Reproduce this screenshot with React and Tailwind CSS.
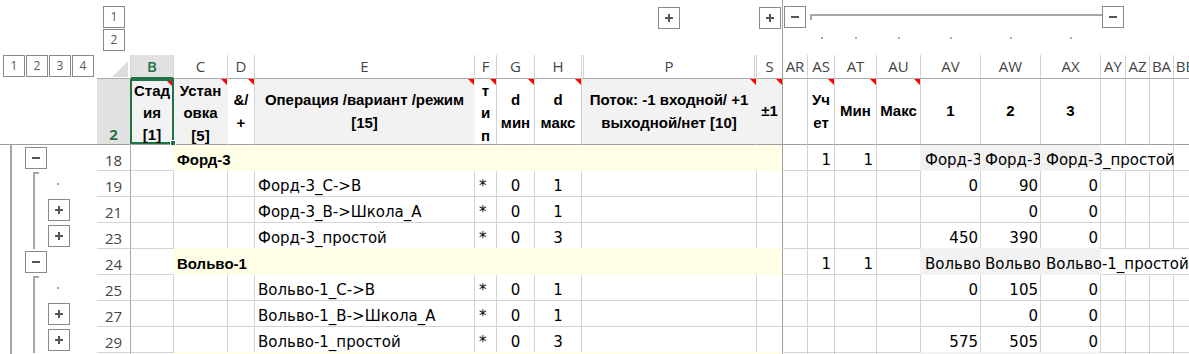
import React from "react";

const F_CELL = "font-['DejaVu_Sans',sans-serif]";
const F_BOLD = "font-['Liberation_Sans',Arial,sans-serif] font-bold";
const F_UI = "font-['Open_Sans',sans-serif]";

const COLS = [
  { k: "B", w: "w-[43px]" },
  { k: "C", w: "w-[54px]" },
  { k: "D", w: "w-[27px]" },
  { k: "E", w: "w-[220px]" },
  { k: "F", w: "w-[22px]" },
  { k: "G", w: "w-[38px]" },
  { k: "H", w: "w-[47px]" },
  { k: "P", w: "w-[175px]" },
  { k: "S", w: "w-[26px]" },
  { k: "AR", w: "w-[25px]" },
  { k: "AS", w: "w-[27px]" },
  { k: "AT", w: "w-[42px]" },
  { k: "AU", w: "w-[44px]" },
  { k: "AV", w: "w-[60px]" },
  { k: "AW", w: "w-[60px]" },
  { k: "AX", w: "w-[60px]" },
  { k: "AY", w: "w-[25px]" },
  { k: "AZ", w: "w-[24px]" },
  { k: "BA", w: "w-[24px]" },
  { k: "BB", w: "w-[24px]" },
];

const YCOLS = ["C", "D", "E", "F", "G", "H", "P", "S"];
const GCOLS = ["AV", "AW", "AX"];

const H2 = {
  C: { lines: ["Устан", "овка", "[5]"], grey: true, tri: true },
  D: { lines: ["&/", "+"], tri: true },
  E: { lines: ["Операция /вариант /режим", "[15]"], grey: true, tri: true },
  F: { lines: ["т", "и", "п"], tri: true },
  G: { lines: ["d", "мин"], tri: true },
  H: { lines: ["d", "макс"], tri: true },
  P: { lines: ["Поток: -1 входной/ +1", "выходной/нет [10]"], grey: true, tri: true },
  S: { lines: ["±1"], grey: true, tri: true },
  AR: { lines: [] },
  AS: { lines: ["Уч", "ет"], tri: true },
  AT: { lines: ["Мин"], tri: true },
  AU: { lines: ["Макс"], tri: true },
  AV: { lines: ["1"] },
  AW: { lines: ["2"] },
  AX: { lines: ["3"] },
};

const ROWS = [
  { n: 18, o: "group", g: true, txt: "Форд-3", as: "1", at: "1", av: "Форд-3", aw: "Форд-3", ax: "Форд-3_простой", hide: ["AY", "AZ"] },
  { n: 19, o: "first", e: "Форд-3_С->В", h: "1", av: "0", aw: "90", ax: "0" },
  { n: 21, o: "plus", e: "Форд-3_В->Школа_А", h: "1", av: "", aw: "0", ax: "0" },
  { n: 23, o: "plus", e: "Форд-3_простой", h: "3", av: "450", aw: "390", ax: "0", next: true },
  { n: 24, o: "group", g: true, txt: "Вольво-1", as: "1", at: "1", av: "Вольво-1", aw: "Вольво-1", ax: "Вольво-1_простой", hide: ["AY", "AZ", "BA"] },
  { n: 25, o: "first", e: "Вольво-1_С->В", h: "1", av: "0", aw: "105", ax: "0" },
  { n: 27, o: "plus", e: "Вольво-1_В->Школа_А", h: "1", av: "", aw: "0", ax: "0" },
  { n: 29, o: "plus", e: "Вольво-1_простой", h: "3", av: "575", aw: "505", ax: "0", next: true },
  { n: 30, o: "group", g: true, txt: "", av: "", aw: "", ax: "" },
];

function Tri({ s = 6 }) {
  return (
    <svg className="absolute top-0 right-0" width={s} height={s} viewBox="0 0 6 6">
      <polygon points="0,0 6,0 6,6" fill="#ff0000" />
    </svg>
  );
}

function OBtn({ sign }) {
  return (
    <div className="w-[22px] h-[22px] shrink-0 border border-[#8a8a8a] bg-white flex items-center justify-center">
      <svg width="8" height="8" viewBox="0 0 8 8">
        <rect x="0" y="3" width="8" height="2" fill="#555555" />
        {sign === "+" && <rect x="3" y="0" width="2" height="8" fill="#555555" />}
      </svg>
    </div>
  );
}

function LevelBtn({ n }) {
  return (
    <div className={`w-[22px] h-[22px] shrink-0 border border-[#8a8a8a] flex items-center justify-center text-[12px] text-[#595959] ${F_UI}`}>
      {n}
    </div>
  );
}

function Dot() {
  return <div className="w-[2px] h-[2px] bg-[#ababab]" />;
}

function TopBand() {
  const right = COLS.slice(9, 16);
  return (
    <div className="flex h-[55px] w-max">
      <div className="w-[97px] shrink-0" />
      <div className="w-[34px] shrink-0 flex flex-col gap-[1px] pt-[6px] pl-[6px]">
        <LevelBtn n="1" />
        <LevelBtn n="2" />
      </div>
      <div className="w-[652px] shrink-0 border-r border-r-[#9e9e9e] flex items-start pt-[7px]">
        <div className="w-[527px] shrink-0" />
        <OBtn sign="+" />
        <div className="w-[79px] shrink-0" />
        <OBtn sign="+" />
      </div>
      <div className="flex flex-col">
        <div className="h-[29px] flex items-start pt-[6px]">
          <div className="w-[1px] shrink-0" />
          <OBtn sign="-" />
          <div className="ml-[4px] mt-[8px] w-[292px] h-[6px] shrink-0 border-l-2 border-t-2 border-l-[#a6a6a6] border-t-[#a6a6a6]" />
          <OBtn sign="-" />
        </div>
        <div className="h-[26px] flex">
          {right.map((c) => (
            <div key={c.k} className={`${c.w} shrink-0 flex justify-center pt-[8px]`}>
              {c.k !== "AR" && <Dot />}
            </div>
          ))}
        </div>
      </div>
    </div>
  );
}

function ColHead({ c }) {
  const rc = c.k === "S" ? "border-r-[#9e9e9e]" : "border-r-[#d4d4d4]";
  if (c.k === "P") {
    return (
      <div className={`${c.w} shrink-0 border-b border-b-[#ababab] border-r ${rc} flex`}>
        <div className={`flex-1 mx-[1px] border-l border-r border-l-[#d4d4d4] border-r-[#d4d4d4] flex items-center justify-center text-[15px] text-[#444444] ${F_UI}`}>
          P
        </div>
      </div>
    );
  }
  const sel = c.k === "B";
  return (
    <div
      className={`${c.w} shrink-0 border-r ${rc} ${
        sel
          ? "border-b-2 border-b-[#217346] bg-[#e1e1e1] text-[#217346] font-semibold"
          : "border-b border-b-[#ababab] text-[#444444]"
      } flex items-center justify-center overflow-hidden whitespace-nowrap text-[15px] ${F_UI}`}
    >
      {c.k}
    </div>
  );
}

function ColHeaderRow() {
  return (
    <div className="flex h-[24px] w-max">
      <div className="w-[97px] shrink-0 flex gap-[1px] pl-[3px]">
        {["1", "2", "3", "4"].map((n) => (
          <LevelBtn key={n} n={n} />
        ))}
      </div>
      <div className="w-[34px] shrink-0 border-b border-b-[#ababab] border-r border-r-[#d4d4d4] flex items-end justify-end pr-[2px] pb-[1px]">
        <svg width="16" height="16" viewBox="0 0 16 16">
          <polygon points="16,0 16,16 0,16" fill="#dcdcdc" />
        </svg>
      </div>
      {COLS.map((c) => (
        <ColHead key={c.k} c={c} />
      ))}
    </div>
  );
}

function H2Cell({ c }) {
  const d = H2[c.k] || { lines: [] };
  const rc = c.k === "S" ? "border-r-[#9e9e9e]" : d.grey ? "border-r-[#f2f2f2]" : "border-r-[#d4d4d4]";
  const three = d.lines.length === 3;
  return (
    <div
      className={`${c.w} shrink-0 relative border-b border-b-[#9e9e9e] border-r ${rc} ${
        d.grey ? "bg-[#f2f2f2]" : ""
      } flex flex-col items-center justify-center ${three ? "pt-[4px]" : ""} leading-[22.5px] text-[15px] text-black whitespace-nowrap ${F_BOLD}`}
    >
      {d.lines.map((l, i) => (
        <div key={i}>{l}</div>
      ))}
      {d.tri && <Tri />}
    </div>
  );
}

function HeaderRow2() {
  return (
    <div className="flex h-[66px] w-max">
      <div className="w-[97px] shrink-0 border-b border-b-[#9e9e9e]" />
      <div className={`w-[34px] shrink-0 bg-[#e1e1e1] border-b border-b-[#9e9e9e] border-r border-r-[#ababab] flex items-end justify-center leading-[20px] text-[15px] font-bold text-[#217346] ${F_UI}`}>
        2
      </div>
      <div className="w-[43px] shrink-0 border-b border-b-[#9e9e9e] flex">
        <div className={`relative flex-1 -ml-[1px] border-2 border-[#217346] bg-[#f2f2f2] flex flex-col items-center justify-center pt-[3px] leading-[22px] text-[15px] text-black whitespace-nowrap ${F_BOLD}`}>
          <div>Стад</div>
          <div>ия</div>
          <div>[1]</div>
          <Tri s={5} />
          <div className="absolute -right-[4px] -bottom-[4px] z-10 w-[6px] h-[6px] bg-[#217346] border border-white" />
        </div>
      </div>
      {COLS.slice(1).map((c) => (
        <H2Cell key={c.k} c={c} />
      ))}
    </div>
  );
}

function Outline({ type }) {
  return (
    <div className="w-[97px] shrink-0 h-full flex">
      <div className="w-[10px] shrink-0" />
      <div className="w-[2px] shrink-0 h-full bg-[#a6a6a6]" />
      {type === "group" ? (
        <>
          <div className="w-[13px] shrink-0" />
          <div className="flex items-center">
            <OBtn sign="-" />
          </div>
        </>
      ) : (
        <>
          <div className="w-[21px] shrink-0" />
          <div
            className={`w-[6px] shrink-0 border-l-2 border-l-[#a6a6a6] ${
              type === "first" ? "mt-[1px] border-t-2 border-t-[#a6a6a6]" : ""
            }`}
          />
          {type === "first" ? (
            <>
              <div className="w-[18px] shrink-0" />
              <div className="flex items-center">
                <Dot />
              </div>
            </>
          ) : (
            <>
              <div className="w-[9px] shrink-0" />
              <div className="flex items-center">
                <OBtn sign="+" />
              </div>
            </>
          )}
        </>
      )}
    </div>
  );
}

function DataCell({ c, r }) {
  const k = c.k;
  const yel = r.g && YCOLS.includes(k);
  const gry = r.g && GCOLS.includes(k);
  const bg = yel ? "bg-[#fffee6]" : gry ? "bg-[#f2f2f2]" : "";

  let rb = "border-r-[#d4d4d4]";
  if (k === "S") rb = "border-r-[#9e9e9e]";
  else if (yel) rb = "border-r-[#fffee6]";
  else if (gry) rb = "border-r-[#f2f2f2]";
  else if (r.g && k === "B") rb = "border-r-[#fffee6]";
  else if (r.g && k === "AU") rb = "border-r-[#f2f2f2]";
  else if (r.hide && r.hide.includes(k)) rb = "border-r-transparent";

  let bb = "border-b-[#d4d4d4]";
  if (yel) bb = "border-b-[#fffee6]";
  else if (gry) bb = "border-b-[#f2f2f2]";
  else if (r.next && YCOLS.includes(k)) bb = "border-b-[#fffee6]";
  else if (r.next && GCOLS.includes(k)) bb = "border-b-[#f2f2f2]";

  let content = null;
  let align = "justify-start";
  let extra = "";

  if (r.g) {
    if (k === "C" && r.txt) {
      content = <span className={`relative z-10 pl-[3px] text-[15px] ${F_BOLD}`}>{r.txt}</span>;
    } else if (k === "AS" && r.as) {
      content = <span className="pr-[3px]">{r.as}</span>;
      align = "justify-end";
    } else if (k === "AT" && r.at) {
      content = <span className="pr-[3px]">{r.at}</span>;
      align = "justify-end";
    } else if ((k === "AV" || k === "AW") && r[k.toLowerCase()]) {
      content = <span className="pl-[4px]">{r[k.toLowerCase()]}</span>;
      extra = "overflow-hidden";
    } else if (k === "AX" && r.ax) {
      content = <span className="relative z-10 pl-[5px]">{r.ax}</span>;
    }
  } else {
    if (k === "E") content = <span className="pl-[3px]">{r.e}</span>;
    else if (k === "F") content = <span className="pl-[4px]">*</span>;
    else if (k === "G") {
      content = <span>0</span>;
      align = "justify-center";
    } else if (k === "H") {
      content = <span>{r.h}</span>;
      align = "justify-center";
    } else if (GCOLS.includes(k)) {
      const v = r[k.toLowerCase()];
      if (v) content = <span className="pr-[2px]">{v}</span>;
      align = "justify-end";
    }
  }

  return (
    <div
      className={`${c.w} shrink-0 h-full border-r border-b ${rb} ${bb} ${bg} flex items-end ${align} ${extra} whitespace-nowrap leading-[20px] text-[15px] text-black`}
    >
      {content}
    </div>
  );
}

function DataRow({ r }) {
  return (
    <div className="flex h-[26px] w-max">
      <Outline type={r.o} />
      <div className={`w-[34px] shrink-0 h-full border-b border-b-[#d4d4d4] border-r border-r-[#ababab] flex items-end justify-center leading-[20px] text-[15px] text-[#444444] ${F_UI}`}>
        {r.n}
      </div>
      {COLS.map((c) => (
        <DataCell key={c.k} c={c} r={r} />
      ))}
    </div>
  );
}

export default function App() {
  return (
    <div className={`w-[1189px] h-[354px] overflow-hidden bg-white text-black ${F_CELL}`}>
      <TopBand />
      <ColHeaderRow />
      <HeaderRow2 />
      {ROWS.map((r) => (
        <DataRow key={r.n} r={r} />
      ))}
    </div>
  );
}
